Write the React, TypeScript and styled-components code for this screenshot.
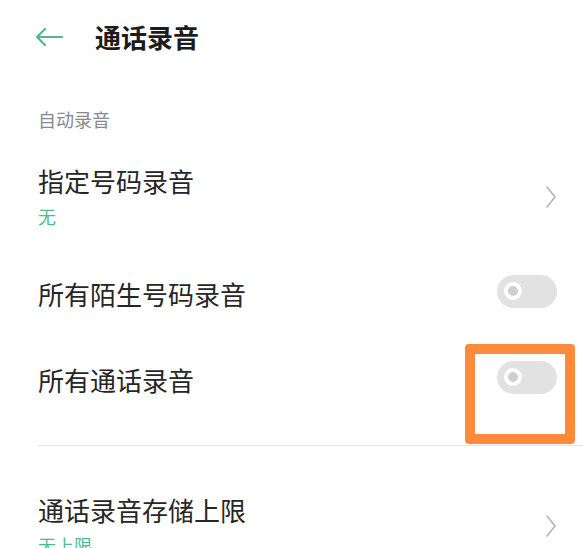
import React from "react";
import styled, { createGlobalStyle } from "styled-components";

const GlobalStyle = createGlobalStyle`
  html, body {
    margin: 0;
    padding: 0;
    background: #ffffff;
  }
  body {
    font-family: "Noto Sans CJK SC", "Noto Sans", sans-serif;
    color: #222222;
  }
`;

const Page = styled.div`
  width: 583px;
  height: 548px;
  overflow: hidden;
  background: #ffffff;
`;

const Header = styled.div`
  height: 74px;
  display: flex;
  align-items: center;
  padding-left: 35px;
`;

const BackButton = styled.div`
  width: 28px;
  height: 20px;
  margin-right: 32px;
  display: flex;
  align-items: center;
`;

const Title = styled.h1`
  margin: 0;
  font-size: 26px;
  line-height: 30px;
  font-weight: 700;
  color: #1c1c1c;
`;

const SectionLabel = styled.div`
  margin-top: 33px;
  padding-left: 38px;
  font-size: 18px;
  line-height: 24px;
  color: #8a8a8a;
`;

const Row = styled.div<{ $pad?: string; $height?: number }>`
  position: relative;
  display: flex;
  align-items: center;
  justify-content: space-between;
  padding: ${(p) => p.$pad ?? "0"};
  padding-left: 38px;
  padding-right: 26px;
  ${(p) => (p.$height ? `height: ${p.$height}px;` : "")}
  box-sizing: border-box;
`;

const TextBlock = styled.div`
  display: flex;
  flex-direction: column;
  gap: 8px;
`;

const ItemTitle = styled.div`
  font-size: 26px;
  line-height: 30px;
  color: #262626;
`;

const ItemValue = styled.div`
  font-size: 18px;
  line-height: 24px;
  color: #4dbb8e;
`;

const Toggle = styled.div`
  width: 60px;
  height: 33px;
  border-radius: 17px;
  background: #e2e2e2;
  display: flex;
  align-items: center;
  padding-left: 7px;
  box-sizing: border-box;
  margin-bottom: 6px;
`;

const Knob = styled.div`
  width: 18px;
  height: 18px;
  border-radius: 50%;
  box-sizing: border-box;
  border: 4px solid #ffffff;
  background: #cfcfcf;
`;

const Divider = styled.div`
  height: 1px;
  margin: 22px 0 0 38px;
  background: #e6e6e6;
`;

const Highlight = styled.div`
  position: absolute;
  right: 8px;
  top: 7px;
  width: 110px;
  height: 100px;
  box-sizing: border-box;
  border: 10px solid #ff8a3a;
  border-radius: 4px;
`;

const BackArrow = () => (
  <svg width="28" height="20" viewBox="0 0 28 20" fill="none">
    <path
      d="M27 10H2M10 2L2 10L10 18"
      stroke="#4fb890"
      strokeWidth="2.2"
      strokeLinecap="round"
      strokeLinejoin="round"
    />
  </svg>
);

const Chevron = () => (
  <svg width="12" height="24" viewBox="0 0 12 24" fill="none">
    <path
      d="M2 2L10 12L2 22"
      stroke="#b4b4b4"
      strokeWidth="1.6"
      strokeLinecap="round"
      strokeLinejoin="round"
    />
  </svg>
);

const Switch = () => (
  <Toggle>
    <Knob />
  </Toggle>
);

export default function App() {
  return (
    <Page>
      <GlobalStyle />
      <Header>
        <BackButton>
          <BackArrow />
        </BackButton>
        <Title>通话录音</Title>
      </Header>

      <SectionLabel>自动录音</SectionLabel>

      <Row $pad="35px 0 23px">
        <TextBlock>
          <ItemTitle>指定号码录音</ItemTitle>
          <ItemValue>无</ItemValue>
        </TextBlock>
        <Chevron />
      </Row>

      <Row $height={86}>
        <ItemTitle>所有陌生号码录音</ItemTitle>
        <Switch />
      </Row>

      <Row $height={86}>
        <ItemTitle>所有通话录音</ItemTitle>
        <Switch />
        <Highlight />
      </Row>

      <Divider />

      <Row $pad="49px 0 0">
        <TextBlock>
          <ItemTitle>通话录音存储上限</ItemTitle>
          <ItemValue>无上限</ItemValue>
        </TextBlock>
        <Chevron />
      </Row>
    </Page>
  );
}
